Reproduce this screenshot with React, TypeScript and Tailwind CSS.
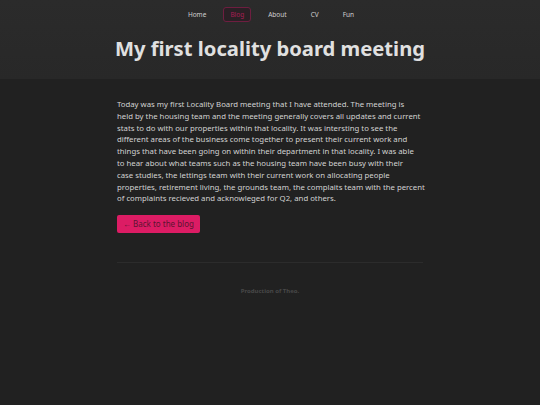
import * as React from "react"

const navItems = ["Home", "Blog", "About", "CV", "Fun"]

const lines = [
  "Today was my first Locality Board meeting that I have attended. The meeting is",
  "held by the housing team and the meeting generally covers all updates and current",
  "stats to do with our properties within that locality. It was intersting to see the",
  "different areas of the business come together to present their current work and",
  "things that have been going on within their department in that locality. I was able",
  "to hear about what teams such as the housing team have been busy with their",
  "case studies, the lettings team with their current work on allocating people",
  "properties, retirement living, the grounds team, the complaits team with the percent",
  "of complaints recieved and acknowleged for Q2, and others.",
]

export default function App() {
  return (
    <div className="min-h-[405px] bg-[#212121] font-['Noto_Sans','Open_Sans',sans-serif]">
      <header className="bg-gradient-to-b from-[#2b2b2b] to-[#282828] h-[79px] flex flex-col items-center">
        <nav className="flex items-center gap-[10px] pt-[7px] pl-[2px]">
          {navItems.map((item) => (
            <a
              key={item}
              className={
                item === "Blog"
                  ? "h-[15px] px-[6px] flex items-center rounded-[3px] border border-[#6e1e40] bg-[#2a2025] text-[6.5px] text-[#a81e54]"
                  : "h-[15px] px-[6px] flex items-center border border-transparent text-[6.5px] text-[#d0d0d0]"
              }
            >
              {item}
            </a>
          ))}
        </nav>
        <h1 className="mt-[12px] text-[20.2px] leading-[28px] font-bold text-[#e0e0e0]">
          My first locality board meeting
        </h1>
      </header>

      <main className="w-[306px] mx-auto pt-[20px]">
        <p className="text-[7.78px] leading-[11.8px] text-[#d2d2d2] whitespace-nowrap">
          {lines.map((line, i) => (
            <React.Fragment key={i}>
              {line}
              {i < lines.length - 1 && <br />}
            </React.Fragment>
          ))}
        </p>
        <a className="mt-[10px] inline-flex items-center h-[18px] px-[6px] rounded-[2px] bg-[#dc1c64] text-[8px] text-[#5c1432]">
          ← Back to the blog
        </a>
        <hr className="mt-[29px] border-0 border-t border-[#2c2c2c]" />
        <footer className="pt-[24px] text-center text-[6px] font-bold text-[#484848]">
          Production of Theo.
        </footer>
      </main>
    </div>
  )
}
